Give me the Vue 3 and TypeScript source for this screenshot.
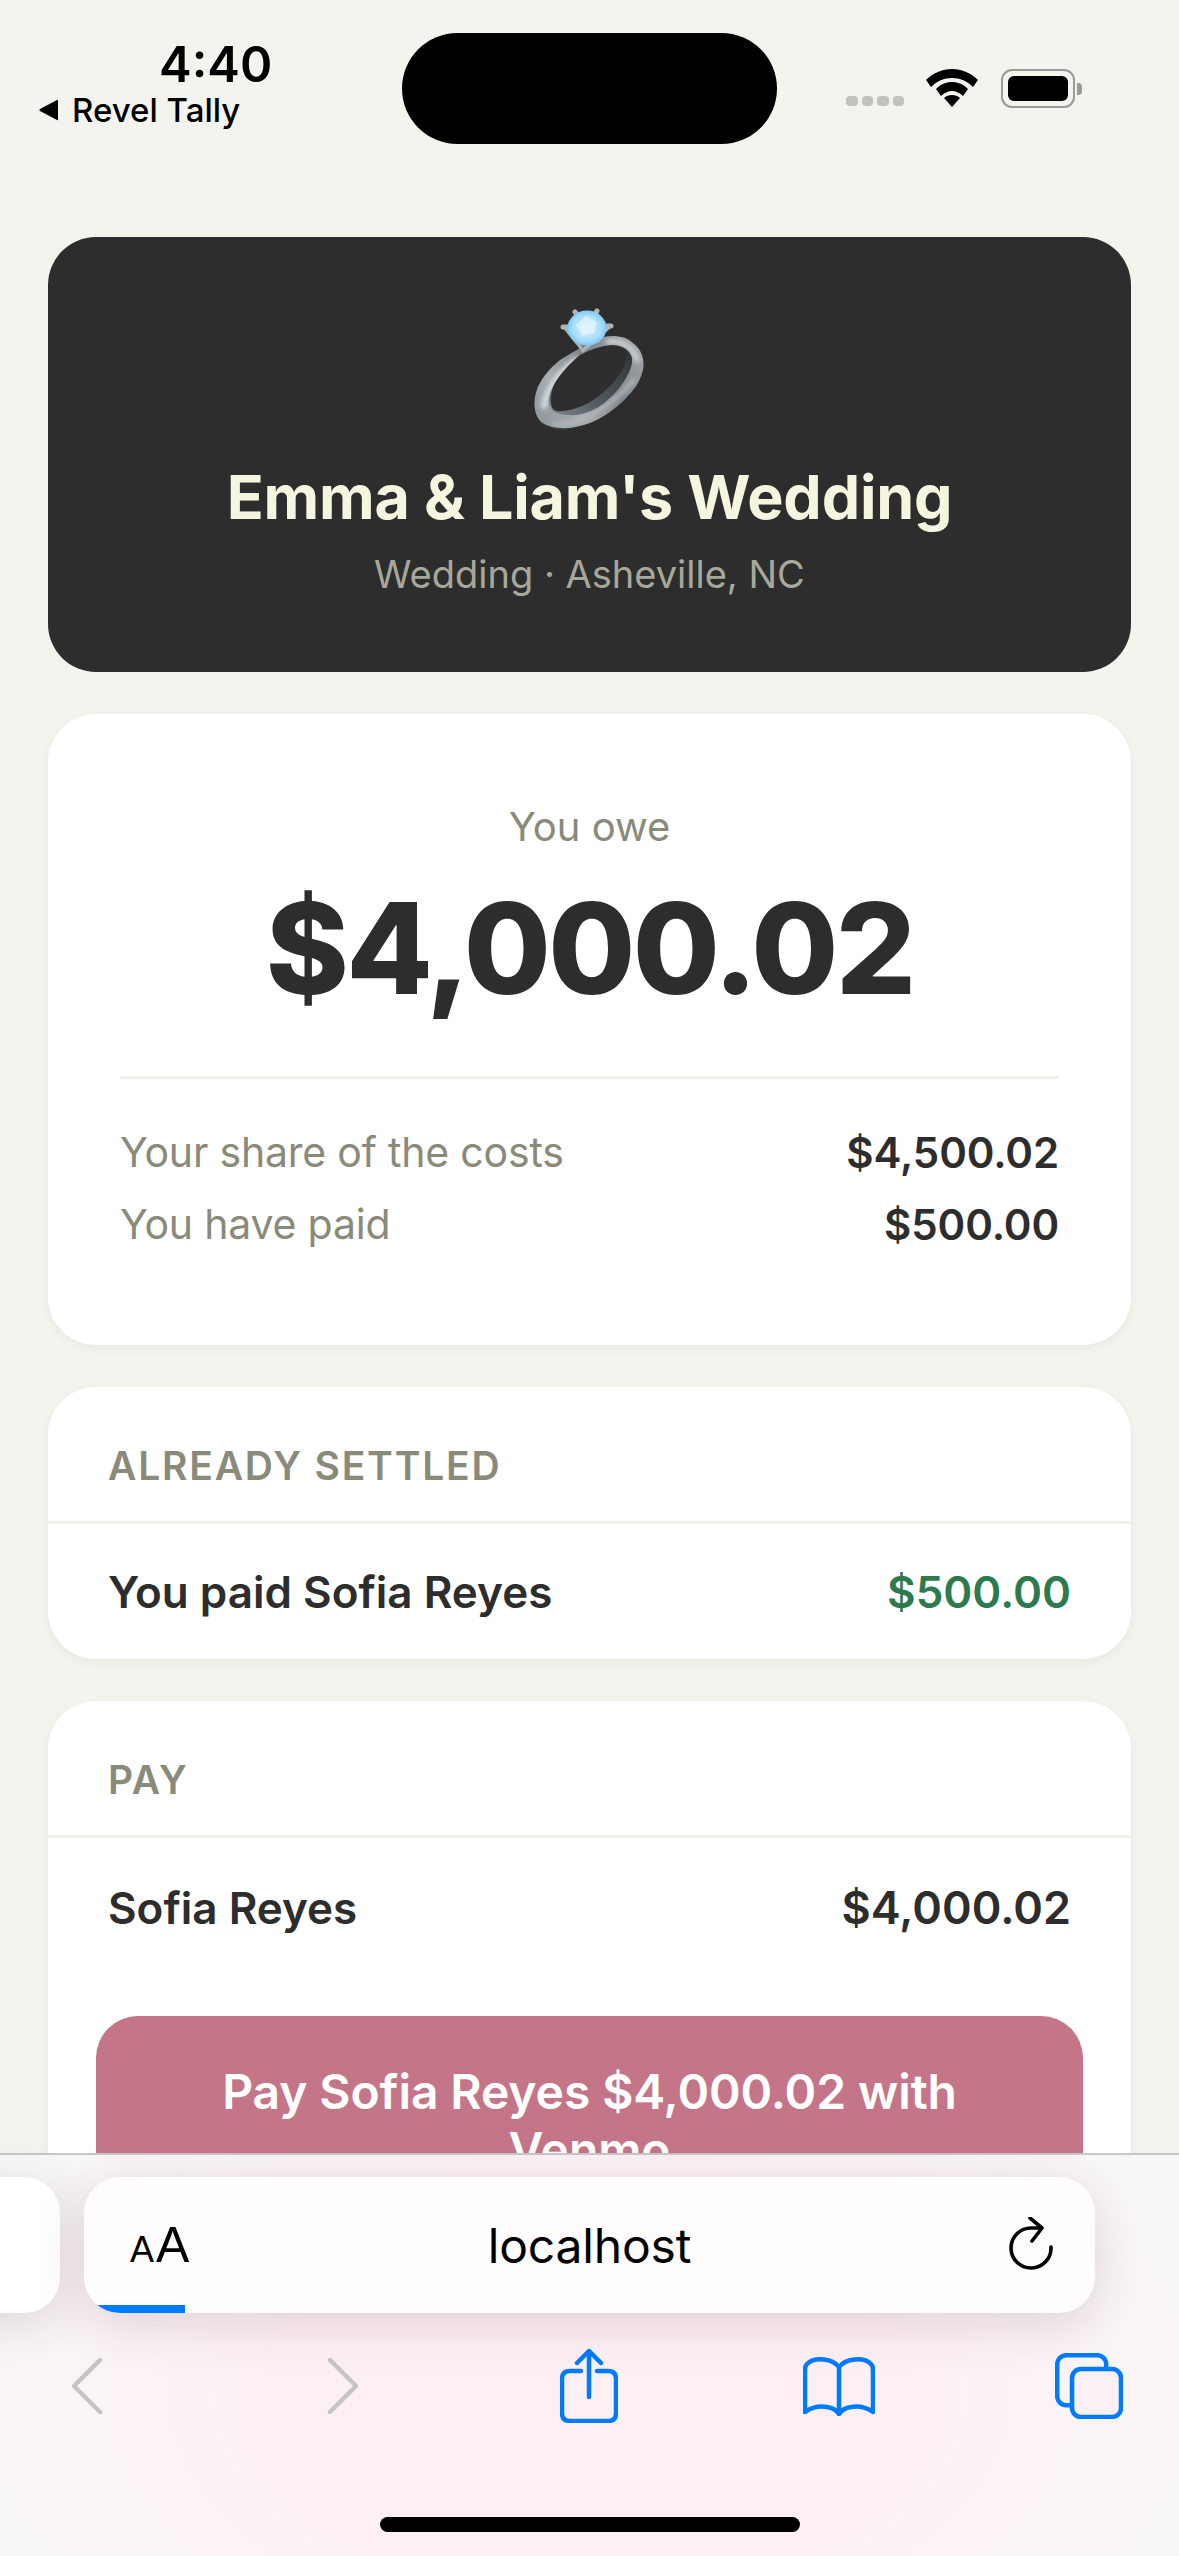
<script setup lang="ts">
interface Row {
  label: string
  value: string
}

const costRows: Row[] = [
  { label: 'Your share of the costs', value: '$4,500.02' },
  { label: 'You have paid', value: '$500.00' },
]
</script>

<template>
  <div class="phone">
    <header class="status">
      <div class="status__left">
        <div class="status__time">4:40</div>
        <div class="status__back">
          <svg class="status__tri" width="22" height="22" viewBox="0 0 22 22"><path d="M20 1.5v19q0 1-1 .4L2 12q-1.500-1 0-2L19 1.100q1-.500 1 .4z" fill="#000" /></svg>
          <span>Revel Tally</span>
        </div>
      </div>
      <div class="status__island"></div>
      <div class="status__right">
        <div class="status__dots"><i></i><i></i><i></i><i></i></div>
        <svg width="52" height="38" viewBox="0 0 52 38">
          <path d="M26 0C16 0 7 4 0 11l5 7c6-6 13-9 21-9s15 3 21 9l5-7C45 4 36 0 26 0z" fill="#000" />
          <path d="M26 13c-6 0-11 2-16 7l5 7c3-3 7-5 11-5s8 2 11 5l5-7c-5-5-10-7-16-7z" fill="#000" />
          <path d="M26 26c-3 0-6 1-8 3l8 9 8-9c-2-2-5-3-8-3z" fill="#000" />
        </svg>
        <div class="status__batt">
          <div class="status__batt-shell"><div class="status__batt-fill"></div></div>
          <div class="status__batt-nub"></div>
        </div>
      </div>
    </header>

    <main class="content">
      <section class="hero">
        <svg class="hero__ring" width="120" height="132" viewBox="0 0 120 132">
          <defs>
            <linearGradient id="band" x1="0" y1="0.9" x2="1" y2="0.2">
              <stop offset="0" stop-color="#8f969b" />
              <stop offset="0.3" stop-color="#a8aeb2" />
              <stop offset="0.65" stop-color="#7d848a" />
              <stop offset="1" stop-color="#a0a6aa" />
            </linearGradient>
            <linearGradient id="inner" x1="0" y1="1" x2="1" y2="0.2">
              <stop offset="0" stop-color="#7f878c" />
              <stop offset="0.5" stop-color="#4f565b" />
              <stop offset="1" stop-color="#353739" />
            </linearGradient>
            <radialGradient id="gem" cx="0.5" cy="0.5" r="0.52">
              <stop offset="0" stop-color="#d4efff" />
              <stop offset="0.7" stop-color="#a8defa" />
              <stop offset="1" stop-color="#7cc4f2" />
            </radialGradient>
            <filter id="soft" x="-20%" y="-20%" width="140%" height="140%"><feGaussianBlur stdDeviation="2.200" /></filter>
            <filter id="edge" x="-5%" y="-5%" width="110%" height="110%"><feGaussianBlur stdDeviation="0.500" /></filter>
          </defs>
          <g filter="url(#edge)">
            <path d="M47 50C55 44 65 38 73 37C85 35 95 36 103 43C112 50 115 60 113 70C110 82 104 90 97 97C85 110 72 118 60 123C48 127 38 129 30 128C20 127 12 125 8 118C3 110 3 95 10 83C16 72 24 65 30 60C36 56 41 53 47 50Z" fill="url(#band)" />
            <path d="M14 106C16 90 30 72 46 60" fill="none" stroke="#d6dadd" stroke-width="6" stroke-linecap="round" filter="url(#soft)" />
            <path d="M78 42C90 40 104 47 107 60" fill="none" stroke="#cbd0d3" stroke-width="5" stroke-linecap="round" filter="url(#soft)" />
            <path d="M24 124C45 126 78 110 104 80" fill="none" stroke="#b4b9bc" stroke-width="4" stroke-linecap="round" filter="url(#soft)" />
            <path d="M50 55C62 49 74 45 83 45C92 45 100 50 102 58C103 68 96 79 90 87C83 96 75 103 67 108C57 113 47 116 40 115C30 115 23 113 20 107C17 100 20 91 25 83C30 75 37 66 50 55Z" fill="url(#inner)" />
            <path d="M50 55C62 49 72 46 80 46C90 46 97 50 97 57C96 66 88 78 80 86C72 94 62 102 52 106C42 110 30 113 24 110C19 106 20 92 25 83C30 75 37 66 50 55Z" fill="#2d2d2d" />
            <path d="M32 27L53 53L82 27Z" fill="#a9afb3" />
            <path d="M44 34L53 48L66 34Z" fill="#6f767b" />
            <g fill="none" stroke="#aeb3b6" stroke-width="5" stroke-linecap="round">
              <path d="M45 12l3 4M67 11l-3 4M33 27h4M81 26h-4M46 40l3-3M68 40l-3-3" />
            </g>
            <ellipse cx="57" cy="28" rx="19.500" ry="17.500" fill="url(#gem)" />
            <path d="M46 25l10-9 11 6-3 11-12 3z" fill="#ecf9ff" opacity=".6" />
          </g>
        </svg>
        <h1 class="hero__title">Emma &amp; Liam's Wedding</h1>
        <p class="hero__sub">Wedding · Asheville, NC</p>
      </section>

      <section class="card owe">
        <div class="owe__label">You owe</div>
        <div class="owe__amount">$4,000.02</div>
        <div class="owe__rows">
          <div v-for="r in costRows" :key="r.label" class="owe__row">
            <span>{{ r.label }}</span>
            <strong>{{ r.value }}</strong>
          </div>
        </div>
      </section>

      <section class="card">
        <div class="card__head">ALREADY SETTLED</div>
        <div class="line">
          <span>You paid Sofia Reyes</span>
          <span class="line__green">$500.00</span>
        </div>
      </section>

      <section class="card">
        <div class="card__head">PAY</div>
        <div class="line line--pay">
          <span>Sofia Reyes</span>
          <span class="line__total">$4,000.02</span>
        </div>
        <div class="pay-wrap">
          <button class="pay-btn">Pay Sofia Reyes $4,000.02 with Venmo</button>
        </div>
      </section>
    </main>

    <footer class="safari">
      <div class="safari__addr-row">
        <div class="safari__prev"></div>
        <div class="safari__addr">
          <div class="safari__aa"><span class="small">A</span><span class="big">A</span></div>
          <div class="safari__host">localhost</div>
          <svg class="safari__reload" width="46" height="56" viewBox="0 0 46 56" fill="none" stroke="#000" stroke-width="3.600" stroke-linecap="round" stroke-linejoin="round">
            <path d="M42 30a20 20 0 1 1-20-19h10" />
            <path d="M21 1l12 10-10 13" />
          </svg>
          <div class="safari__progress"></div>
        </div>
      </div>
      <nav class="safari__nav">
        <svg width="32" height="56" viewBox="0 0 32 56" fill="none" stroke="#c4c4c6" stroke-width="4.500" stroke-linecap="round" stroke-linejoin="round"><path d="M29 2L3 28l26 26" /></svg>
        <svg width="32" height="56" viewBox="0 0 32 56" fill="none" stroke="#c4c4c6" stroke-width="4.500" stroke-linecap="round" stroke-linejoin="round"><path d="M3 2l26 26L3 54" /></svg>
        <svg width="58" height="74" viewBox="0 0 58 74" fill="none" stroke="#007aff" stroke-width="4.500" stroke-linecap="round" stroke-linejoin="round">
          <path d="M21 22H10q-8 0-8 8v34q0 8 8 8h38q8 0 8-8V30q0-8-8-8H37" />
          <path d="M29 48V2M17 14L29 2l12 12" />
        </svg>
        <svg width="72" height="60" viewBox="0 0 72 60" fill="none" stroke="#007aff" stroke-width="4.500" stroke-linecap="round" stroke-linejoin="round">
          <path d="M36 11C30 3 12 0 4 8q-2 2-2 6v42q10-7 22-5 8 1 12 7 4-6 12-7 12-2 22 5V14q0-4-2-6c-8-8-26-5-32 3v47" />
        </svg>
        <svg width="68" height="66" viewBox="0 0 68 66" fill="none" stroke="#007aff" stroke-width="4.500" stroke-linejoin="round">
          <rect x="2.200" y="2.200" width="49" height="50" rx="9" />
          <rect x="17" y="16" width="49" height="48" rx="9" fill="#fbf0f4" />
        </svg>
      </nav>
      <div class="safari__home"></div>
    </footer>
  </div>
</template>

<style scoped>
.phone {
  position: relative;
  width: 1179px;
  height: 2556px;
  overflow: hidden;
  background: #f4f4ef;
  font-family: Inter, "Liberation Sans", sans-serif;
  color: #2d2d2d;
}

.status {
  display: flex;
  align-items: flex-start;
  height: 237px;
  box-sizing: border-box;
  padding: 33px 97px 0 38px;
  color: #000;
}
.status__left {
  width: 364px;
}
.status__time {
  padding-left: 121px;
  font-size: 49px;
  font-weight: 600;
  line-height: 60px;
  margin-top: 2px;
}
.status__back {
  display: flex;
  align-items: center;
  gap: 12px;
  margin-top: -7px;
  font-size: 33px;
  font-weight: 500;
  line-height: 44px;
}
.status__island {
  width: 375px;
  height: 111px;
  border-radius: 56px;
  background: #000;
}
.status__right {
  display: flex;
  align-items: flex-start;
  margin-left: 69px;
  padding-top: 36px;
}
.status__dots {
  display: flex;
  gap: 4px;
  margin-top: 27px;
  margin-right: 22px;
}
.status__dots i {
  width: 11.500px;
  height: 10px;
  border-radius: 4px;
  background: #c2c2be;
}
.status__batt {
  display: flex;
  align-items: center;
  margin-left: 23px;
}
.status__batt-shell {
  box-sizing: border-box;
  width: 74px;
  height: 39px;
  padding: 5px;
  border: 2.500px solid #9a9a96;
  border-radius: 11px;
}
.status__batt-fill {
  width: 100%;
  height: 100%;
  border-radius: 6px;
  background: #000;
}
.status__batt-nub {
  width: 5px;
  height: 12px;
  margin-left: 2px;
  border-radius: 0 4px 4px 0;
  background: #9a9a96;
}

.content {
  display: flex;
  flex-direction: column;
  gap: 42px;
  padding: 0 48px;
}
.hero {
  display: flex;
  flex-direction: column;
  align-items: center;
  height: 435px;
  box-sizing: border-box;
  padding-top: 63px;
  border-radius: 48px;
  background: #2d2d2d;
}
.hero__ring {
  display: block;
}
.hero__title {
  margin: 27px 0 0;
  font-size: 61px;
  font-weight: 700;
  line-height: 76px;
  letter-spacing: -0.2px;
  color: #f5f5e0;
}
.hero__sub {
  margin: 14px 0 0;
  font-size: 38px;
  line-height: 50px;
  color: #a8a89a;
}

.card {
  border-radius: 48px;
  background: #fff;
  box-shadow: 0 3px 12px rgba(0, 0, 0, 0.05);
}
.owe {
  height: 631px;
  box-sizing: border-box;
  padding: 88px 72px 0;
  text-align: center;
}
.owe__label {
  font-size: 40px;
  line-height: 50px;
  color: #8a8a7a;
}
.owe__amount {
  margin-top: 21px;
  font-size: 126px;
  font-weight: 800;
  line-height: 150px;
  letter-spacing: -2.700px;
}
.owe__rows {
  margin-top: 53px;
  padding-top: 37px;
  border-top: 3px solid #f0f0ea;
}
.owe__row {
  display: flex;
  justify-content: space-between;
  height: 72px;
  align-items: center;
  font-size: 41px;
  letter-spacing: -0.2px;
  color: #8a8a7a;
}
.owe__row strong {
  font-size: 42px;
  font-weight: 600;
  letter-spacing: -0.1px;
  color: #2d2d2d;
}

.card__head {
  height: 137px;
  box-sizing: border-box;
  padding: 22px 60px 0;
  display: flex;
  align-items: center;
  border-bottom: 3px solid #f0f0ea;
  font-size: 39px;
  font-weight: 600;
  letter-spacing: 1.800px;
  color: #8a8a7a;
}
.line {
  display: flex;
  justify-content: space-between;
  align-items: center;
  height: 135px;
  padding: 0 60px;
  font-size: 44px;
  font-weight: 600;
}
.line__green {
  color: #2d7a4f;
}
.line--pay {
  height: 139px;
}
.line__total {
  font-size: 45px;
}
.pay-wrap {
  padding: 0 48px 48px;
  margin-top: 39px;
}
.pay-btn {
  display: block;
  width: 100%;
  box-sizing: border-box;
  padding: 47px 48px;
  border: none;
  border-radius: 42px;
  background: #c47688;
  color: #fff;
  font-family: inherit;
  font-size: 48px;
  font-weight: 600;
  line-height: 58px;
  letter-spacing: -0.1px;
}

.safari {
  position: absolute;
  left: 0;
  right: 0;
  bottom: 0;
  height: 403px;
  box-sizing: border-box;
  border-top: 2px solid #c9c6c8;
  background:
    radial-gradient(ellipse 700px 400px at 50% 60%, #fdf0f5 45%, rgba(253, 240, 245, 0) 100%),
    #f8f8f7;
}
.safari__addr-row {
  display: flex;
  gap: 24px;
  margin-top: 22px;
  margin-left: -60px;
}
.safari__prev {
  width: 120px;
  height: 136px;
  border-radius: 36px;
  background: #fff;
  box-shadow: 0 10px 50px rgba(80, 40, 50, 0.16);
}
.safari__addr {
  position: relative;
  display: grid;
  grid-template-columns: 1fr auto 1fr;
  align-items: center;
  width: 1011px;
  height: 136px;
  box-sizing: border-box;
  padding: 0 40px 0 46px;
  overflow: hidden;
  border-radius: 36px;
  background: #fffcfd;
  box-shadow: 0 10px 50px rgba(80, 40, 50, 0.16);
}
.safari__aa {
  display: flex;
  align-items: baseline;
  gap: 2px;
  font-family: "Liberation Sans", sans-serif;
  color: #000;
}
.safari__aa .small {
  font-size: 36px;
}
.safari__aa .big {
  font-size: 50px;
}
.safari__host {
  margin-left: -6px;
  font-size: 48px;
  letter-spacing: -0.2px;
  color: #000;
}
.safari__reload {
  justify-self: end;
}
.safari__progress {
  position: absolute;
  left: 0;
  bottom: 0;
  width: 101px;
  height: 8px;
  background: #007aff;
}
.safari__nav {
  display: grid;
  grid-template-columns: 270px 242px 250px 250px 250px;
  justify-items: center;
  align-items: center;
  height: 76px;
  margin-top: 35px;
  margin-left: -48px;
}
.safari__home {
  position: absolute;
  left: 380px;
  bottom: 24px;
  width: 420px;
  height: 15px;
  border-radius: 8px;
  background: #000;
}
</style>

<style>
html, body { margin: 0; background: #f4f4ef; }
</style>
